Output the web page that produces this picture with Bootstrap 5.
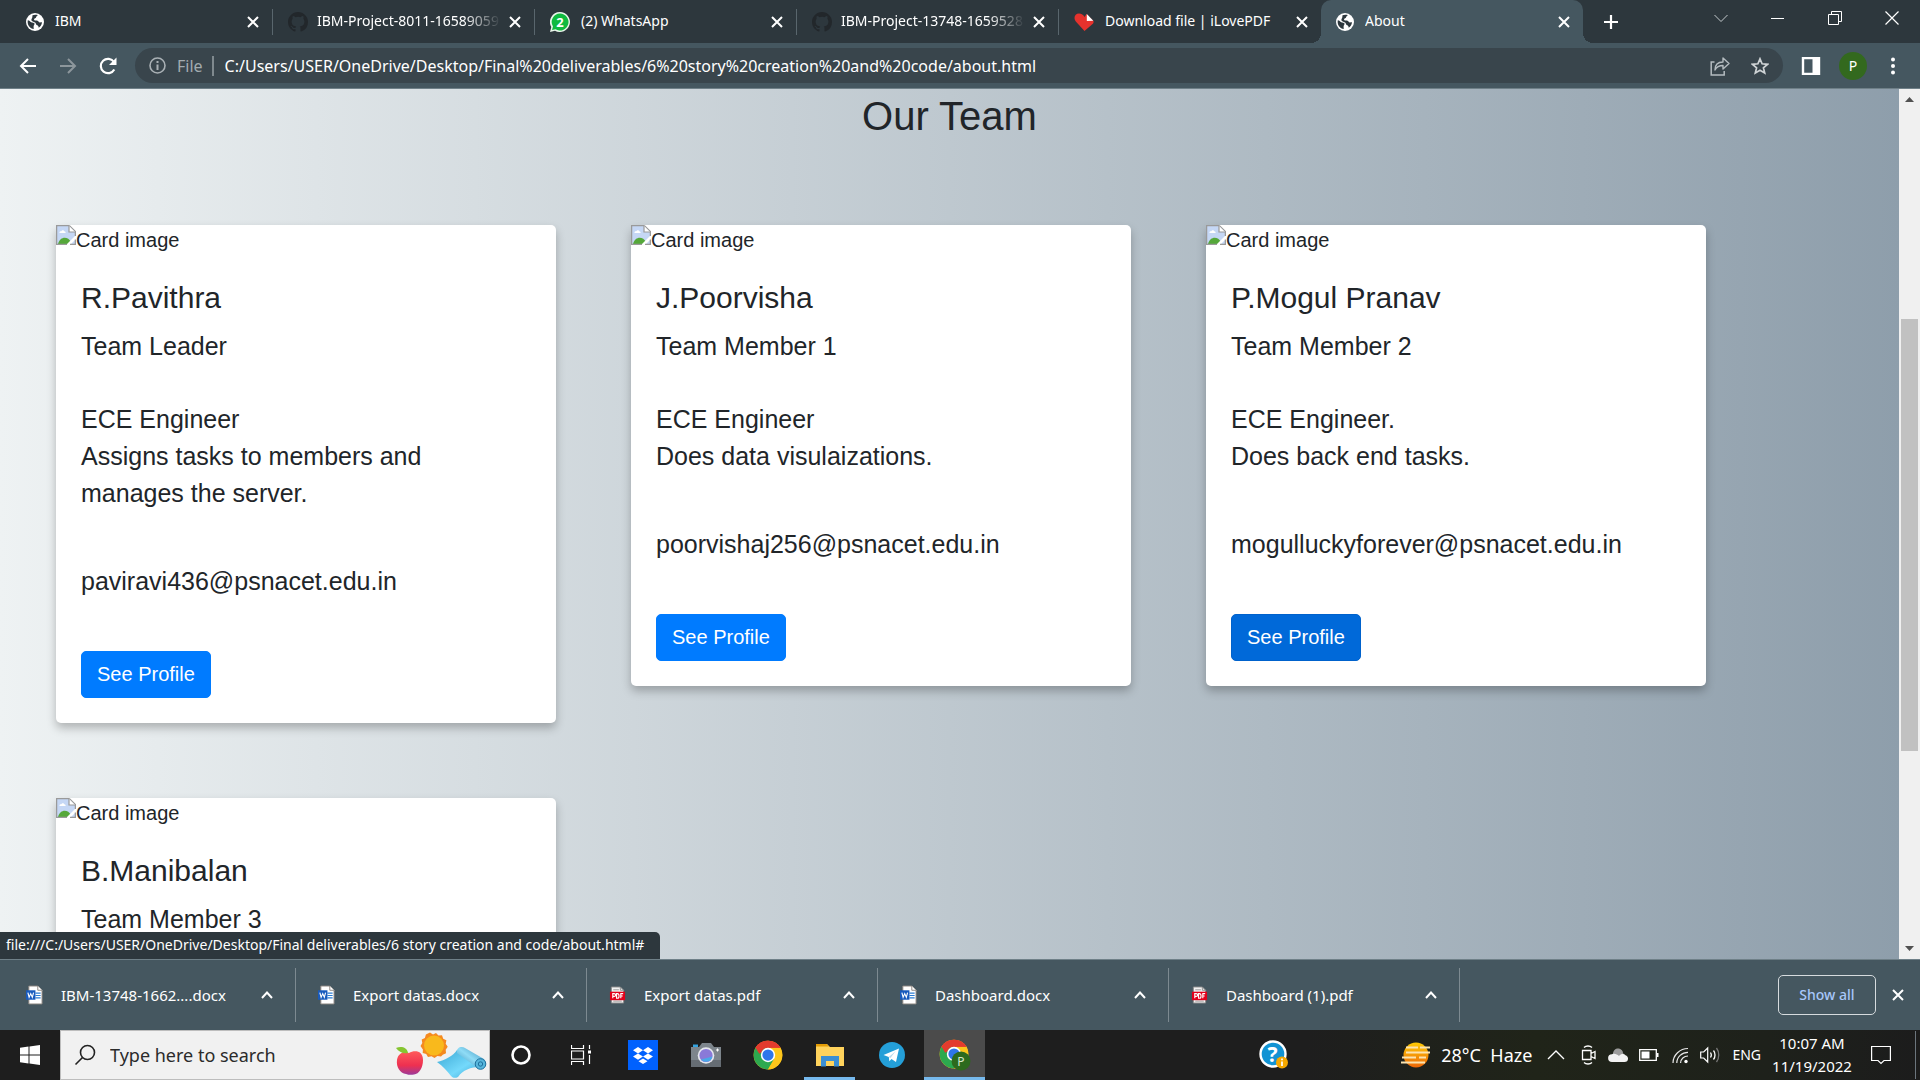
<!DOCTYPE html>
<html lang="en">
<head>
<meta charset="utf-8">
<meta name="viewport" content="width=device-width, initial-scale=1">
<title>About</title>
<link href="https://cdn.jsdelivr.net/npm/bootstrap@5.3.0/dist/css/bootstrap.min.css" rel="stylesheet">
<style>
:root { --frame:#2d373d; --bar:#455760; --pill:#39454c; --line:#6f8088; }
body { font-family:"Noto Sans","Open Sans",sans-serif; font-size:14px; line-height:20px; color:#fff; background:var(--bar); }
svg { display:block; flex:none; }
.ic-btn { background:none; border:0; padding:0; color:inherit; display:flex; align-items:center; justify-content:center; flex:none; }

/* tab strip */
.tab-strip { height:43px; background:var(--frame); padding-left:11px; }
.tab-item { flex:0 1 262px; min-width:0; height:43px; padding:0 11px 0 15px; position:relative; }
.tab-item a { color:#fff; text-decoration:none; overflow:hidden; white-space:nowrap; flex:1 1 0; margin:0 2px 0 11px; padding-bottom:2px; }
.tab-item a.faded { margin-left:9px; -webkit-mask-image:linear-gradient(to right,#000 78%,transparent 98%); mask-image:linear-gradient(to right,#000 78%,transparent 98%); }
.tab-item.divided { border-right:1px solid transparent; border-image:linear-gradient(to bottom,transparent 10px,#59666d 10px,#59666d 34px,transparent 34px) 1; }
.tab-item.current { background:var(--bar); border-radius:10px 10px 0 0; }
.tab-item.current::before, .tab-item.current::after { content:""; position:absolute; bottom:0; width:10px; height:10px; }
.tab-item.current::before { left:-10px; background:radial-gradient(circle at 0 0,transparent 10px,var(--bar) 10px); }
.tab-item.current::after { right:-10px; background:radial-gradient(circle at 100% 0,transparent 10px,var(--bar) 10px); }
.tab-x { width:16px; height:16px; }
.new-tab { width:34px; margin-left:11px; }
.win-btn { width:57px; height:36px; }

/* toolbar */
.tool-bar { height:46px; background:var(--bar); border-bottom:1px solid var(--line); padding:0 17px 0 8px; }
.nav-ic { width:40px; height:35px; }
.omni { height:35px; border-radius:18px; background:var(--pill); padding:0 3px 0 14px; margin-left:7px; }
.omni input { background:none; border:0; outline:0; padding:0; color:#fff; flex:1 1 0; min-width:0; font-size:16px; line-height:24px; }
.omni label { color:#a3abb0; font-size:16px; padding:0 9px 0 11px; line-height:20px; border-right:2px solid #7f898e; margin-right:11px; }

/* document area */
.doc { min-height:0; background:linear-gradient(to right,#eef2f3,#8e9eab); color:#212529; font-family:"Liberation Sans",Arial,sans-serif; overflow:hidden; }
.doc h1 { font-size:40px; line-height:48px; padding-top:3px; margin:0 0 85px; text-align:center; font-weight:400; }
.team-grid { display:grid; grid-template-columns:repeat(3,500px); gap:75px; padding-left:56px; align-items:start; }
.member { background:#fff; border:0; border-radius:5px; box-shadow:0 5px 10px rgba(0,0,0,.25); font-size:25px; line-height:37px; color:#212529; }
.member .photo { height:30px; font-size:20px; line-height:30px; }
.member .card-body { padding:25px; }
.member h2 { font-size:30px; line-height:36px; margin:0 0 12px; font-weight:400; }
.member .role { margin:0 0 36px; }
.member .about { margin:0 0 51px; }
.member .mail { margin:0 0 51px; }
.member .btn { --bs-btn-bg:#007bff; --bs-btn-border-color:#007bff; --bs-btn-font-size:20px; --bs-btn-padding-x:15px; --bs-btn-padding-y:7px; --bs-btn-border-radius:5px; height:47px; display:block; width:fit-content; line-height:31px; }
.member .btn.hovered { --bs-btn-bg:#0069d9; --bs-btn-border-color:#0062cc; }

.scroll-col { width:21px; background:#f0f0f0; flex:none; }
.scroll-col button { height:21px; width:21px; color:#505050; }
.scroll-track { padding:209px 2px 0; }
.scroll-thumb { height:432px; background:#c1c1c1; }
.status-tip { position:absolute; left:0; bottom:0; height:27px; padding:0 16px 0 6px; background:var(--frame); border-top-right-radius:5px; color:#fff; line-height:26px; white-space:nowrap; }

/* download shelf */
.shelf { height:71px; background:var(--bar); border-top:1px solid var(--line); font-size:15px; }
.dl-item { flex:0 1 291px; padding:0 21px 0 22px; height:54px; border-right:1px solid #7d8a91; min-width:0; }
.dl-item:first-child { flex-basis:296px; padding-left:26px; }
.dl-item a { color:#fff; text-decoration:none; flex:1 1 0; margin-left:18px; white-space:nowrap; }
.show-all { height:40px; width:98px; border:1px solid #d6dbde; border-radius:5px; background:none; color:#a8c7fa; font-weight:500; font-size:14px; padding:0; }

/* task bar */
.task-bar { height:50px; background:linear-gradient(to right,#1e1e1e 68%,#202419 80%,#1e211b 92%,#1c1c1c); }
.tb-cell { width:61px; height:50px; position:relative; }
.task-search { width:430px; height:50px; background:#f1f1f1; border:1px solid #bdbdbd; color:#2b2b2b; padding:0 1px 0 13px; }
.task-search input { border:0; background:none; outline:0; padding:0; font-size:18px; line-height:26px; flex:1 1 0; min-width:0; margin-left:14px; color:#2b2b2b; }
.task-search input::placeholder { color:#2b2b2b; opacity:1; }
.running::after { content:""; position:absolute; left:4px; right:4px; bottom:0; height:3px; background:#76b9ed; }
.focused { background:#4b4b4b; }
.focused::after { left:0; right:0; }
.weather { font-size:18px; line-height:24px; gap:10px; color:#fff; }
.clock-box { width:86px; text-align:center; line-height:23px; font-size:15px; }
.tray-ic { width:32px; height:50px; }
</style>
</head>
<body class="vh-100 d-flex flex-column overflow-hidden">

<svg width="0" height="0" class="position-absolute" aria-hidden="true">
  <defs>
    <symbol id="x" viewBox="0 0 16 16"><path d="M3 3l10 10M13 3L3 13" stroke="currentColor" stroke-width="2" fill="none"/></symbol>
    <symbol id="globe" viewBox="0 0 18 18"><circle cx="9" cy="9" r="9" fill="#fff"/><path d="M1.800 7.200c1.600.3 2.400 1.200 3.400 2 1.200.5 3 .1 3.300 1.400.2 1.400-1 1.800-.9 3 .1.900-.1 1.900.3 2.500C4 15.700.9 11.800 1.800 7.200z" fill="#2d373d"/><path d="M6.500 2.200c1.500-.6 3.600-.7 5.200-.1-.3 1.400-1.700 1.200-1.700 2.500 0 .9-1.900.6-2 1.900.1 1.200 1.800.9 3 1 1.500.2 1.500 1.900 3 1.900 1 0 1.400-.2 2-.1-.2 2.300-1.500 4.300-3.300 5.500-.1-1.300-.4-2.200-1.600-2.500-1.200-.3-1-1.600-1.700-2.500C8.300 8.600 6.300 8.800 5.500 7.400 5 6 6.300 5.200 6.300 4.200z" fill="#2d373d"/></symbol>
    <symbol id="gh" viewBox="0 0 16 16"><path fill="#22272b" d="M8 0C3.580 0 0 3.580 0 8c0 3.540 2.290 6.530 5.470 7.590.4.070.55-.17.55-.38 0-.19-.01-.82-.01-1.490-2.010.37-2.530-.49-2.690-.94-.09-.23-.48-.94-.82-1.130-.28-.15-.68-.52-.01-.53.63-.01 1.080.58 1.230.82.72 1.210 1.870.87 2.330.66.070-.52.28-.87.51-1.070-1.780-.2-3.640-.89-3.640-3.950 0-.87.31-1.590.82-2.150-.08-.2-.36-1.020.08-2.120 0 0 .67-.21 2.200.82a7.400 7.400 0 0 1 4 0c1.530-1.040 2.200-.82 2.200-.82.44 1.100.16 1.920.08 2.120.51.56.82 1.270.82 2.150 0 3.070-1.870 3.750-3.650 3.950.29.25.54.73.54 1.480 0 1.070-.01 1.930-.01 2.200 0 .21.15.46.55.38A8.010 8.010 0 0 0 16 8c0-4.420-3.580-8-8-8z"/></symbol>
    <symbol id="broken" viewBox="0 0 20 20"><path d="M1 1h12l6 6v12H1z" fill="#c5d7f5"/><path d="M3.500 7.500c0-1.500 1.500-1.500 1.800-1.200.4-1.500 2.700-1.500 3 0 1.300 0 1.500 1.200 1.200 1.700H3.500z" fill="#fff"/><path d="M2 19c2-8 10-8 13-2l-2 2z" fill="#55a83a"/><path d="M10 20L20 10v4l-6 6z" fill="#fff"/><path d="M13.400.6l6 6V11M11 19.400H.6V.6h12.800M19.400 14.500v4.900H14" fill="none" stroke="#9a9a9a" stroke-width="1.300"/><path d="M13 1v6h6" fill="#fff" stroke="#9a9a9a" stroke-width="1.200"/></symbol>
    <symbol id="up" viewBox="0 0 14 14"><path d="M2 10l5-5.500L12 10" stroke="#fff" stroke-width="2" fill="none"/></symbol>
    <symbol id="word" viewBox="0 0 18 20"><path d="M3 .5h9.500L17 5v14.500H3z" fill="#fff" stroke="#8b8580"/><path d="M12.500.5V5H17" fill="#fff" stroke="#8b8580"/><path d="M10 8h5.500M10 10.500h5.500M10 13h5.500" stroke="#2b7cd3" stroke-width="1.200"/><path d="M0 5h10v10H0z" fill="#185abd"/><path d="M2 7.500l1.300 5L5 8.500l1.700 4 1.300-5" stroke="#fff" stroke-width="1.200" fill="none"/></symbol>
    <symbol id="pdf" viewBox="0 0 18 20"><path d="M2.500 1.500h9.500l3.500 3.500v13.500h-13z" fill="#f3f3f3" stroke="#8b8b8b"/><path d="M4.500 4.500h6M4.500 16.500h9" stroke="#9a9a9a"/><path d="M12 1.500V5h3.500" fill="none" stroke="#8b8b8b"/><path d="M1 6.500h16v9H1z" fill="#e2001a"/><path d="M4 13.500v-5h1.500a1.200 1.200 0 0 1 0 3H4M8 8.500v5h1c2.200 0 2.200-5 0-5zM12.500 13.500v-5H15M12.500 11h2" stroke="#fff" stroke-width="1.200" fill="none"/></symbol>
    <symbol id="chrome" viewBox="0 0 48 48"><circle cx="24" cy="24" r="23" fill="#fbc116"/><path d="M24 24L4.100 12.500A23 23 0 0 1 43.900 12.500z" fill="#e33b2e"/><path d="M4.100 12.500A23 23 0 0 0 24 47l10-17.500L24 24z" fill="#2da94f"/><path d="M24 12.500h19.900A23 23 0 0 1 24 47l10.500-17z" fill="#fdc61b"/><path d="M4.100 12.500h.1L14 29.700 24 13z" fill="#2da94f"/><path d="M4.100 12.500A23 23 0 0 1 43.900 12.500H24c-5 0-9 3-10.500 7.500L10 22z" fill="#e33b2e"/><circle cx="24" cy="24" r="11.500" fill="#fff"/><circle cx="24" cy="24" r="9" fill="#2f76ea"/></symbol>
  </defs>
</svg>

<header class="flex-shrink-0">
  <nav class="tab-strip d-flex align-items-center" aria-label="Tabs">
    <div class="tab-item divided d-flex align-items-center"><svg width="18" height="18"><use href="#globe"/></svg><a href="#">IBM</a><button class="ic-btn tab-x" aria-label="Close tab"><svg width="16" height="16"><use href="#x"/></svg></button></div>
    <div class="tab-item divided d-flex align-items-center"><svg width="20" height="20"><use href="#gh"/></svg><a href="#" class="faded">IBM-Project-8011-16589059</a><button class="ic-btn tab-x" aria-label="Close tab"><svg width="16" height="16"><use href="#x"/></svg></button></div>
    <div class="tab-item divided d-flex align-items-center"><svg width="20" height="20" viewBox="0 0 20 20"><path d="M10 0a10 10 0 1 1-5 18.700L0 20l1.300-5A10 10 0 0 1 10 0z" fill="#e9f6ea"/><path d="M10 1.500a8.500 8.500 0 1 1-4.500 15.700L2 18l1-3.500A8.500 8.500 0 0 1 10 1.500z" fill="#0fba3f"/><text x="10" y="14.500" text-anchor="middle" font-size="13" font-weight="700" fill="#fff">2</text></svg><a href="#">(2) WhatsApp</a><button class="ic-btn tab-x" aria-label="Close tab"><svg width="16" height="16"><use href="#x"/></svg></button></div>
    <div class="tab-item divided d-flex align-items-center"><svg width="20" height="20"><use href="#gh"/></svg><a href="#" class="faded">IBM-Project-13748-1659528</a><button class="ic-btn tab-x" aria-label="Close tab"><svg width="16" height="16"><use href="#x"/></svg></button></div>
    <div class="tab-item d-flex align-items-center"><svg width="20" height="20" viewBox="0 0 20 20"><path d="M10.500 19L1.800 9.500C-1 6 1 1.500 5 1.500c2.500 0 4.500 1.200 5.500 3.500l2-3 7 7c.5 1.500-.5 3-1.500 3.500z" fill="#e5322d"/><path d="M12.800 2l6.500 6.800-6.500.2z" fill="#fff"/></svg><a href="#">Download file | iLovePDF</a><button class="ic-btn tab-x" aria-label="Close tab"><svg width="16" height="16"><use href="#x"/></svg></button></div>
    <div class="tab-item current d-flex align-items-center"><svg width="18" height="18"><use href="#globe"/></svg><a href="#" aria-current="page">About</a><button class="ic-btn tab-x" aria-label="Close tab"><svg width="16" height="16"><use href="#x"/></svg></button></div>
    <button class="ic-btn new-tab" aria-label="New tab"><svg width="18" height="18" viewBox="0 0 18 18"><path d="M9 2v14M2 9h14" stroke="#fff" stroke-width="2.200"/></svg></button>
    <div class="ms-auto d-flex align-self-start">
      <button class="ic-btn win-btn" aria-label="Search tabs"><svg width="14" height="14" viewBox="0 0 14 14"><path d="M.5 4L7 10.500 13.500 4" stroke="#c5cbce" fill="none"/></svg></button>
      <button class="ic-btn win-btn" aria-label="Minimize"><svg width="14" height="14" viewBox="0 0 14 14"><path d="M0 7.500h13" stroke="#fff"/></svg></button>
      <button class="ic-btn win-btn" aria-label="Restore"><svg width="14" height="14" viewBox="0 0 14 14"><path d="M.5 3.500h10v10H.5zM3.500 3V.5h10v10H11" stroke="#fff" fill="none"/></svg></button>
      <button class="ic-btn win-btn" aria-label="Close"><svg width="14" height="14" viewBox="0 0 14 14"><path d="M.5.5l13 13M13.500.5l-13 13" stroke="#fff" stroke-width="1.200"/></svg></button>
    </div>
  </nav>

  <div class="tool-bar d-flex align-items-center">
    <button class="ic-btn nav-ic" aria-label="Back"><svg width="18" height="18" viewBox="0 0 18 18"><path d="M17 9H2M9 2L2 9l7 7" stroke="#fff" stroke-width="2" fill="none"/></svg></button>
    <button class="ic-btn nav-ic" aria-label="Forward"><svg width="18" height="18" viewBox="0 0 18 18"><path d="M1 9h15M9 2l7 7-7 7" stroke="#8d979c" stroke-width="2" fill="none"/></svg></button>
    <button class="ic-btn nav-ic" aria-label="Reload"><svg width="18" height="18" viewBox="0 0 18 18"><path d="M15.300 12.500A7.200 7.200 0 1 1 15 5" stroke="#fff" stroke-width="2.200" fill="none"/><path d="M17.500.5v7.500h-7.500z" fill="#fff"/></svg></button>
    <div class="omni d-flex align-items-center flex-grow-1">
      <svg width="17" height="17" viewBox="0 0 17 17"><circle cx="8.500" cy="8.500" r="7.500" fill="none" stroke="#a9b0b4" stroke-width="1.600"/><path d="M8.500 7.500V13M8.500 4v2" stroke="#a9b0b4" stroke-width="2"/></svg>
      <label for="url">File</label>
      <input id="url" type="text" value="C:/Users/USER/OneDrive/Desktop/Final%20deliverables/6%20story%20creation%20and%20code/about.html">
      <button class="ic-btn nav-ic" aria-label="Share"><svg width="20" height="20" viewBox="0 0 20 20"><path d="M4.500 6H1.200v13h13v-4" stroke="#b5bcc0" stroke-width="1.500" fill="none"/><path d="M5 14c0-5 3-8 8-8V2l6 5.500-6 5.500V9.500c-4 0-6.500 1.500-8 4.500z" stroke="#b5bcc0" stroke-width="1.400" fill="none" stroke-linejoin="round"/></svg></button>
      <button class="ic-btn nav-ic" aria-label="Bookmark"><svg width="18" height="18" viewBox="0 0 18 18"><path d="M9 1.800l2.100 5 5.400.5-4.100 3.500 1.300 5.200L9 13.200 4.300 16l1.300-5.200L1.500 7.300l5.400-.5z" stroke="#cfd3d5" stroke-width="1.700" fill="none"/></svg></button>
    </div>
    <button class="ic-btn ms-3" aria-label="Side panel"><svg width="24" height="18" viewBox="0 0 24 18"><path d="M4 1h16v16H4z" fill="none" stroke="#fff" stroke-width="2.400"/><path d="M13.500 1H20v16h-6.500z" fill="#fff"/></svg></button>
    <button class="ic-btn ms-3" aria-label="Profile"><svg width="28" height="28" viewBox="0 0 28 28"><circle cx="14" cy="14" r="14" fill="#33691e"/><text x="14" y="19" text-anchor="middle" font-size="14" fill="#fff">P</text></svg></button>
    <button class="ic-btn ms-3" aria-label="Menu"><svg width="20" height="18" viewBox="0 0 20 18"><circle cx="10" cy="2.500" r="2" fill="#fff"/><circle cx="10" cy="9" r="2" fill="#fff"/><circle cx="10" cy="15.500" r="2" fill="#fff"/></svg></button>
  </div>
</header>

<div class="d-flex flex-grow-1 position-relative overflow-hidden">
  <main class="doc flex-grow-1">
    <h1>Our Team</h1>
    <div class="team-grid">
      <article class="member card">
        <div class="photo d-flex"><svg width="20" height="20"><use href="#broken"/></svg><span>Card image</span></div>
        <div class="card-body">
          <h2>R.Pavithra</h2>
          <p class="role">Team Leader</p>
          <p class="about">ECE Engineer<br>Assigns tasks to members and manages the server.</p>
          <p class="mail">paviravi436@psnacet.edu.in</p>
          <a href="#" class="btn btn-primary">See Profile</a>
        </div>
      </article>
      <article class="member card">
        <div class="photo d-flex"><svg width="20" height="20"><use href="#broken"/></svg><span>Card image</span></div>
        <div class="card-body">
          <h2>J.Poorvisha</h2>
          <p class="role">Team Member 1</p>
          <p class="about">ECE Engineer<br>Does data visulaizations.</p>
          <p class="mail">poorvishaj256@psnacet.edu.in</p>
          <a href="#" class="btn btn-primary">See Profile</a>
        </div>
      </article>
      <article class="member card">
        <div class="photo d-flex"><svg width="20" height="20"><use href="#broken"/></svg><span>Card image</span></div>
        <div class="card-body">
          <h2>P.Mogul Pranav</h2>
          <p class="role">Team Member 2</p>
          <p class="about">ECE Engineer.<br>Does back end tasks.</p>
          <p class="mail">mogulluckyforever@psnacet.edu.in</p>
          <a href="#" class="btn btn-primary hovered">See Profile</a>
        </div>
      </article>
      <article class="member card">
        <div class="photo d-flex"><svg width="20" height="20"><use href="#broken"/></svg><span>Card image</span></div>
        <div class="card-body">
          <h2>B.Manibalan</h2>
          <p class="role">Team Member 3</p>
        </div>
      </article>
    </div>
  </main>
  <div class="scroll-col d-flex flex-column" aria-hidden="true">
    <button class="ic-btn" tabindex="-1"><svg width="9" height="5" viewBox="0 0 9 5"><path d="M0 5L4.500 0 9 5z" fill="currentColor"/></svg></button>
    <div class="scroll-track flex-grow-1"><div class="scroll-thumb"></div></div>
    <button class="ic-btn" tabindex="-1"><svg width="9" height="5" viewBox="0 0 9 5"><path d="M0 0h9L4.500 5z" fill="currentColor"/></svg></button>
  </div>
  <div class="status-tip">file:///C:/Users/USER/OneDrive/Desktop/Final deliverables/6 story creation and code/about.html#</div>
</div>

<section class="shelf d-flex align-items-center flex-shrink-0" aria-label="Downloads">
  <div class="dl-item d-flex align-items-center"><svg width="17" height="20"><use href="#word"/></svg><a href="#">IBM-13748-1662....docx</a><button class="ic-btn" aria-label="Options"><svg width="14" height="14"><use href="#up"/></svg></button></div>
  <div class="dl-item d-flex align-items-center"><svg width="17" height="20"><use href="#word"/></svg><a href="#">Export datas.docx</a><button class="ic-btn" aria-label="Options"><svg width="14" height="14"><use href="#up"/></svg></button></div>
  <div class="dl-item d-flex align-items-center"><svg width="17" height="20"><use href="#pdf"/></svg><a href="#">Export datas.pdf</a><button class="ic-btn" aria-label="Options"><svg width="14" height="14"><use href="#up"/></svg></button></div>
  <div class="dl-item d-flex align-items-center"><svg width="17" height="20"><use href="#word"/></svg><a href="#">Dashboard.docx</a><button class="ic-btn" aria-label="Options"><svg width="14" height="14"><use href="#up"/></svg></button></div>
  <div class="dl-item d-flex align-items-center"><svg width="17" height="20"><use href="#pdf"/></svg><a href="#">Dashboard (1).pdf</a><button class="ic-btn" aria-label="Options"><svg width="14" height="14"><use href="#up"/></svg></button></div>
  <button class="show-all ms-auto">Show all</button>
  <button class="ic-btn mx-3" aria-label="Close shelf"><svg width="12" height="14" viewBox="2 1 12 14"><use href="#x" width="16" height="16"/></svg></button>
</section>

<footer class="task-bar d-flex align-items-center flex-shrink-0">
  <button class="ic-btn tb-cell" style="width:60px" aria-label="Start"><svg width="20" height="20" viewBox="0 0 20 20"><path d="M0 2.800L8.500 1.600v8H0zM9.500 1.400L20 0v9.600H9.500zM0 10.500h8.500v8L0 17.300zM9.500 10.500H20V20L9.500 18.600z" fill="#fff"/></svg></button>
  <div class="task-search d-flex align-items-center">
    <svg width="22" height="22" viewBox="0 0 22 22"><circle cx="13.500" cy="8.500" r="7" stroke="#222" stroke-width="1.600" fill="none"/><path d="M8.500 13.500L1.500 20.500" stroke="#222" stroke-width="1.600"/></svg>
    <input type="text" placeholder="Type here to search" aria-label="Type here to search">
    <svg width="93" height="48" viewBox="0 0 93 48">
      <defs>
        <linearGradient id="ap" x1="0" y1="0" x2="0" y2="1"><stop offset="0" stop-color="#ff5a5a"/><stop offset=".6" stop-color="#ee3050"/><stop offset="1" stop-color="#9b3a9b"/></linearGradient>
        <linearGradient id="mt" x1="0" y1="0" x2="1" y2="1"><stop offset="0" stop-color="#3aa7d4"/><stop offset=".6" stop-color="#74d9fb"/><stop offset="1" stop-color="#3ba2d0"/></linearGradient>
        <linearGradient id="rl" x1="1" y1="0" x2="0" y2="1"><stop offset="0" stop-color="#2f86b4"/><stop offset=".5" stop-color="#8fdcf6"/><stop offset="1" stop-color="#2983b0"/></linearGradient>
      </defs>
      <path d="M14 22c5-3 14-3 14 7 0 8-4 14-9 14.500-3 .5-5 .5-8-.5C5 42 1 36 2 29c1-7 7-9 12-7z" fill="url(#ap)"/>
      <path d="M1 17c5-2 11-1 12 5-5 1-9-1-12-5z" fill="#86c531"/>
      <path d="M39 2.500l3 2 3-1.500 2.500 2.500 3.500-.2 1.200 3.500 3.200 1.500-.7 3.500 2 3-2 3 .3 3.500-3.200 1.400L50 26.500l-3.600-.5-2.900 2-3-1.800-3.500.8-1.800-3-3.500-1 .2-3.600L29.500 16l1.800-3-.6-3.500 3.200-1.600 1-3.500z" fill="#f58a1f" transform="translate(-4 -1)"/>
      <circle cx="39" cy="14.500" r="10" fill="#f9b91c"/>
      <path d="M42 31c8-2 16-6 20-12l24 17c-11 0-18 3-23 10-3 1.500-5 1-7-1-4-5-8-10-14-14z" fill="url(#mt)"/>
      <path d="M62 22c-1-6 5-7 8-5l19 11c4 4 1 10-5 10z" fill="url(#rl)"/>
      <circle cx="85.500" cy="33" r="5.300" fill="#57b6dc" stroke="#1e6f9c"/><circle cx="85.500" cy="33" r="2.200" fill="none" stroke="#1e6f9c"/>
    </svg>
  </div>
  <button class="ic-btn tb-cell" aria-label="Cortana"><svg width="22" height="22" viewBox="0 0 22 22"><circle cx="11" cy="11" r="8.500" fill="none" stroke="#fff" stroke-width="2.600"/></svg></button>
  <button class="ic-btn tb-cell" style="width:59px" aria-label="Task view"><svg width="20" height="20" viewBox="0 0 20 20"><path d="M.5 0v3.500h12V0M.5 20v-3.500h12V20M.5 6h12v8H.5zM18.500 0v4M18.500 10v9" fill="none" stroke="#fff" stroke-width="1.200"/><path d="M17 5.500h3v3h-3z" fill="#fff"/></svg></button>
  <button class="ic-btn tb-cell" style="width:66px" aria-label="Dropbox"><svg width="30" height="30" viewBox="0 0 30 30"><path d="M0 0h30v30H0z" fill="#0061fe"/><path d="M10 7l5 3.200-5 3.200-5-3.200zM20 7l5 3.200-5 3.200-5-3.200zM10 13.400l5 3.200-5 3.200-5-3.200zM20 13.400l5 3.200-5 3.200-5-3.200zM15 18.400l4.500 2.900L15 24l-4.500-2.700z" fill="#fff"/></svg></button>
  <button class="ic-btn tb-cell" style="width:60px" aria-label="Camera"><svg width="30" height="24" viewBox="0 0 30 24"><path d="M0 4h8l3-4h9l3 4h7v20H0z" fill="#7d858c"/><path d="M0 17h30v7H0z" fill="#666d74"/><path d="M2 1.500h5V4H2z" fill="#35a3df"/><circle cx="15" cy="12.500" r="8.300" fill="#e6e8ee"/><circle cx="15" cy="12.500" r="6.600" fill="#8a79d8"/><path d="M10 16.500a6.600 6.600 0 0 0 11.500-3z" fill="#4aa8e8"/><path d="M26.500 5.500v3M25 7h3" stroke="#fff"/></svg></button>
  <button class="ic-btn tb-cell" style="width:64px" aria-label="Chrome"><svg width="30" height="30"><use href="#chrome"/></svg></button>
  <button class="ic-btn tb-cell running" style="width:59px" aria-label="File Explorer"><svg width="28" height="24" viewBox="0 0 28 24"><path d="M0 1h11l3 3h14v19H0z" fill="#ffd35c"/><path d="M0 1h10.500l2.500 2.500H0z" fill="#e39c05"/><path d="M5 13h18v10.500h-5V18h-8v5.500H5z" fill="#3b8fd4"/></svg></button>
  <button class="ic-btn tb-cell" style="width:65px" aria-label="Telegram"><svg width="26" height="26" viewBox="0 0 26 26"><circle cx="13" cy="13" r="13" fill="#249fd8"/><path d="M4.500 13L20 6.500l-3 13.500-4.500-3-2.200 2.200-.5-4.200z" fill="#fff"/><path d="M9.800 15l7-6-5.400 7z" fill="#b7d9ec"/></svg></button>
  <button class="ic-btn tb-cell running focused" aria-label="Chrome profile window"><svg width="32" height="34" viewBox="0 0 32 34"><use href="#chrome" width="30" height="30" y="1"/><circle cx="22" cy="23" r="9.500" fill="#2d6a1e"/><text x="22" y="27.500" text-anchor="middle" font-size="12" fill="#d8e8d0">P</text></svg></button>

  <div class="ms-auto d-flex align-items-center">
    <button class="ic-btn me-5" aria-label="Help"><svg width="30" height="30" viewBox="0 0 30 30"><circle cx="14" cy="14" r="12.500" fill="#1193d4" stroke="#fff" stroke-width="2.400"/><text x="13.500" y="21.500" text-anchor="middle" font-size="21" font-weight="700" fill="#fff">?</text><circle cx="23" cy="22.500" r="6" fill="#f5a800"/><path d="M23 21.500v4.500M23 18.500v1.800" stroke="#fff" stroke-width="1.700"/></svg></button>
    <button class="ic-btn weather ms-5 ps-3" aria-label="Weather"><svg width="30" height="26" viewBox="0 0 30 26"><defs><linearGradient id="hz" x1="0" y1="0" x2="0" y2="1"><stop offset="0" stop-color="#ffcb05"/><stop offset="1" stop-color="#ec6608"/></linearGradient></defs><circle cx="15" cy="13" r="12.500" fill="url(#hz)"/><path d="M5 5.500h12M19 5.500h10M5 10.500h24M1 15.500h14M18 15.500h7M0 20.500h24" stroke="#fbe3b0" stroke-width="2.200"/></svg><span>28°C&nbsp; Haze</span></button>
    <button class="ic-btn tray-ic ms-2 me-1" aria-label="Hidden icons"><svg width="18" height="12" viewBox="0 0 18 12"><path d="M1 10l8-8 8 8" stroke="#fff" stroke-width="1.300" fill="none"/></svg></button>
    <button class="ic-btn tray-ic" style="width:26px" aria-label="Meet now"><svg width="16" height="20" viewBox="0 0 16 20"><path d="M1.500 5.500h8.500v9H1.500zM10 8.500l4-2v7l-4-2M3 2.500c2-2 6-2 8 0M3 17.500c2 2 6 2 8 0" stroke="#fff" stroke-width="1.300" fill="none"/></svg></button>
    <button class="ic-btn tray-ic" aria-label="OneDrive"><svg width="20" height="14" viewBox="0 0 20 14"><path d="M5 6c0-4 3-6 6-5.500 2.500.5 4 2.500 4 4.500l2 3-9 2z" fill="#9c9c9c"/><path d="M4 14a3.800 3.800 0 0 1 0-7.800c3-1 5 .3 7 1.800 2-2.500 5-2.500 6.500-.8C21 8 21 14 16.500 14z" fill="#f2f2f2"/></svg></button>
    <button class="ic-btn tray-ic" style="width:30px" aria-label="Battery"><svg width="20" height="12" viewBox="0 0 20 12"><path d="M.7.700h16.600v10.600H.7z" fill="none" stroke="#fff" stroke-width="1.300"/><path d="M2.500 2.500h8v7h-8zM18 4h1.500v4H18z" fill="#fff"/></svg></button>
    <button class="ic-btn tray-ic" aria-label="Network"><svg width="17" height="17" viewBox="0 0 17 17"><path d="M1 16C1 8 8 1.500 16 1.500M4.800 16C4.800 10 10 5.300 16 5.300M8.600 16c0-4 3.400-7 7.400-7" stroke="#e8e8e8" stroke-width="1.200" fill="none"/><circle cx="14" cy="14.500" r="1.700" fill="#fff"/></svg></button>
    <button class="ic-btn tray-ic" style="width:28px" aria-label="Volume"><svg width="20" height="18" viewBox="0 0 20 18"><path d="M.7 6h3l4-4v14l-4-4h-3z" fill="none" stroke="#fff" stroke-width="1.200"/><path d="M10.500 6.500c1 1.500 1 3.500 0 5M13.500 4.500c2 2.500 2 6.500 0 9" stroke="#fff" stroke-width="1.300" fill="none"/><path d="M16.500 2c3 4 3 10 0 14" stroke="#777" stroke-width="1.300" fill="none"/></svg></button>
    <span class="ps-2 pe-2">ENG</span>
    <div class="clock-box">10:07 AM<br>11/19/2022</div>
    <button class="ic-btn ms-3 me-4" aria-label="Notifications"><svg width="20" height="20" viewBox="0 0 20 20"><path d="M.6 1.500h18.800v14H13l-3 3-3-3H.6z" fill="none" stroke="#fff" stroke-width="1.200"/></svg></button>
    <div class="border-start border-secondary py-4 pe-1"></div>
  </div>
</footer>

<script src="https://cdn.jsdelivr.net/npm/bootstrap@5.3.0/dist/js/bootstrap.bundle.min.js"></script>
</body>
</html>
